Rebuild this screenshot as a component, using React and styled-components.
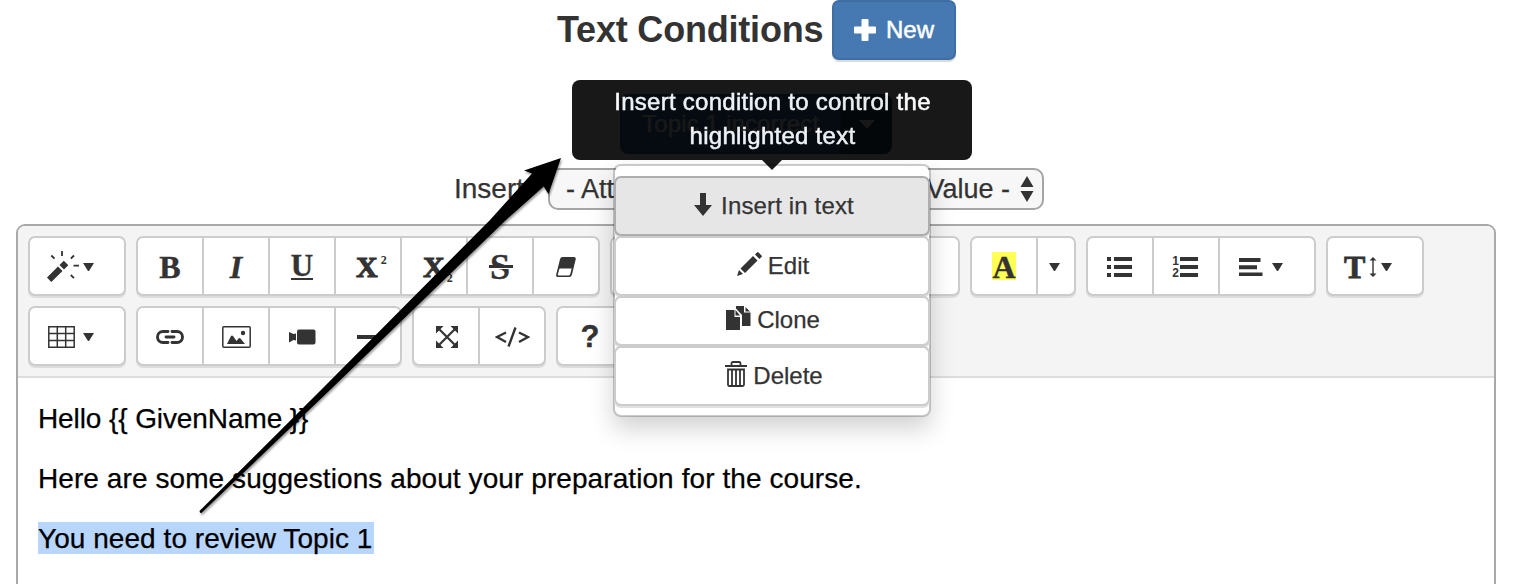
import React from "react";
import styled, { createGlobalStyle, css } from "styled-components";

const GlobalStyle = createGlobalStyle`
  *, *::before, *::after { box-sizing: border-box; }
  html, body { margin: 0; padding: 0; background: #fff; }
  body {
    overflow: hidden;
    color: #333;
    font-family: "Liberation Sans", Arial, sans-serif;
  }
  svg { display: block; flex: none; }
`;

const Page = styled.main`
  position: relative;
  width: 1522px;
  height: 584px;
  overflow: hidden;
`;

const Header = styled.header`
  display: flex;
  height: 60px;
  padding-left: 557px;
  gap: 9px;
`;

const Title = styled.h1`
  width: 266px;
  margin: 0;
  font-size: 36px;
  font-weight: 700;
  line-height: 60px;
  letter-spacing: -0.2px;
  white-space: nowrap;
`;

const Label = styled.span`
  white-space: nowrap;
  letter-spacing: ${(p) => p.$track || 0}px;
  -webkit-text-stroke: ${(p) => p.$stroke || 0.25}px currentColor;
`;

const primary = css`
  display: flex;
  align-items: center;
  height: 60px;
  border: 2px solid #3f6ea3;
  background: #4679b2;
  color: #fff;
  font: 24px "Liberation Sans", Arial, sans-serif;
`;

const NewButton = styled.button`
  ${primary}
  width: 124px;
  gap: 10px;
  padding: 0 0 0 20px;
  border-radius: 7px;
  box-shadow: 0 2px 1px #d9d9d9;
`;

const ConditionRow = styled.div`
  display: flex;
  margin-top: 34px;
  padding-left: 620px;
`;

const ConditionButton = styled.button`
  ${primary}
  width: 221px;
  padding: 0 0 0 20px;
  border-radius: 8px 0 0 8px;
`;

const ConditionToggle = styled.button`
  ${primary}
  justify-content: center;
  width: 51px;
  padding: 0;
  border-color: #204d74;
  background: #284b69;
  border-radius: 0 8px 8px 0;
`;

const InsertRow = styled.div`
  display: flex;
  align-items: center;
  height: 42px;
  margin-top: 14px;
  padding-left: 454px;
  font-size: 28px;
`;

const InsertLabel = styled(Label)`
  width: 94px;
`;

const Select = styled.div`
  display: flex;
  align-items: center;
  justify-content: space-between;
  width: 496px;
  height: 42px;
  padding: 0 8px 0 16px;
  border: 2px solid #a5a5a5;
  border-radius: 10px;
  background: #f7f7f7;
  font-size: 27px;
`;

const SelectEnd = styled.span`
  display: flex;
  align-items: center;
  gap: 10px;
`;

const Editor = styled.section`
  width: 1480px;
  height: 380px;
  margin: 14px 0 0 16px;
  border: 2px solid #a9a9a9;
  border-radius: 9px 9px 0 0;
  overflow: hidden;
`;

const Toolbar = styled.div`
  display: flex;
  flex-direction: column;
  gap: 10px;
  height: 152px;
  padding: 10px;
  border-bottom: 2px solid #ddd;
  background: #f4f4f4;
`;

const ToolRow = styled.div`
  display: flex;
  gap: 10px;
`;

const ToolGroup = styled.div`
  display: flex;
  flex: none;
  width: ${(p) => (p.$width ? `${p.$width}px` : "auto")};
  height: 60px;
  border: 2px solid #ccc;
  border-radius: 7px;
  background: #fff;
  box-shadow: 0 2px 0 #ddd;
`;

const Tool = styled.button`
  display: flex;
  align-items: center;
  justify-content: ${(p) => (p.$indent ? "flex-start" : "center")};
  width: ${(p) => p.$width || 64}px;
  padding: 2px ${(p) => p.$end || 0}px 0 ${(p) => p.$indent || 0}px;
  gap: ${(p) => p.$gap || 0}px;
  border: 0;
  background: transparent;
  color: #333;
  &:not(:first-child) {
    width: ${(p) => (p.$width || 64) + 2}px;
    border-left: 2px solid #ccc;
  }
`;

const Glyph = styled.span`
  font-family: "Liberation Serif", serif;
  font-size: ${(p) => p.$size || 32}px;
  font-weight: 700;
  font-style: ${(p) => (p.$italic ? "italic" : "normal")};
  line-height: 28px;
  -webkit-text-stroke: ${(p) => p.$stroke || 0.4}px #333;
`;

const Underlined = styled(Glyph)`
  height: 25px;
  border-bottom: 2px solid #333;
  line-height: 22px;
  font-size: 31px;
`;

const Struck = styled(Glyph)`
  display: flex;
  align-items: center;
  &::after {
    content: "";
    width: 24px;
    height: 4px;
    margin: 0 -2.500px 0 -21.500px;
    border-bottom: 1px solid #fff;
    background: #333;
  }
`;

const Script = styled.span`
  align-self: ${(p) => (p.$sub ? "flex-end" : "flex-start")};
  margin: ${(p) => (p.$sub ? "0 0 10px 2px" : "14px 0 0 3px")};
  font: 700 12px/12px "Liberation Serif", serif;
`;

const Letter = styled.span`
  font-family: "Liberation Sans", sans-serif;
  font-weight: 700;
  font-size: 31px;
  line-height: 28px;
  -webkit-text-stroke: 0.3px #333;
`;

const Marked = styled(Glyph)`
  width: 24px;
  height: 28px;
  margin-top: -2px;
  background: #ffff54;
  line-height: 31px;
  text-align: center;
`;

const Content = styled.article`
  padding: 20px;
  color: #000;
  font-size: 28px;
`;

const Paragraph = styled.p`
  height: 40px;
  margin: 0 0 20px;
  line-height: 42px;
  white-space: nowrap;
  letter-spacing: ${(p) => p.$track || 0}px;
  -webkit-text-stroke: 0.25px #000;
`;

const Selection = styled.mark`
  display: block;
  width: 336px;
  height: 32px;
  margin-top: 24px;
  background: #b8d6fb;
  color: #000;
  line-height: 33px;
`;

const Menu = styled.div`
  position: absolute;
  left: 613px;
  top: 164px;
  width: 318px;
  height: 253px;
  padding: 10px 0 0;
  border: 2px solid rgba(0, 0, 0, 0.2);
  border-radius: 8px;
  background: #fff;
  background-clip: padding-box;
  box-shadow: 0 12px 24px rgba(0, 0, 0, 0.175);
`;

const MenuItem = styled.button`
  display: flex;
  align-items: center;
  justify-content: center;
  gap: ${(p) => p.$gap || 6}px;
  width: 316px;
  height: ${(p) => p.$height || 60}px;
  margin-left: -1px;
  padding: 0 0 ${(p) => p.$raise || 0}px ${(p) => p.$shift || 2}px;
  border: 2px solid ${(p) => (p.$active ? "#adadad" : "#ccc")};
  border-radius: 7px;
  background: ${(p) => (p.$active ? "#e6e6e6" : "#fff")};
  box-shadow: 0 2px 0 #e0e0e0;
  color: #333;
  font: 24px "Liberation Sans", Arial, sans-serif;
  svg { margin-top: ${(p) => p.$lift || -4}px; }
`;

const Tooltip = styled.div`
  position: absolute;
  left: 572px;
  top: 80px;
  display: flex;
  flex-direction: column;
  align-items: center;
  width: 400px;
  height: 80px;
  padding: 5px 0 0 1px;
  border-radius: 8px;
  background: #000;
  color: #fff;
  opacity: 0.9;
  font-size: 24px;
  line-height: 34px;
  &::after {
    content: "";
    position: absolute;
    left: 190px;
    top: 80px;
    border: 10px solid transparent;
    border-top-color: #000;
    border-bottom: 0;
  }
`;

const Pointer = styled.svg`
  position: absolute;
  left: 180px;
  top: 140px;
  filter: drop-shadow(1px 2px 1px rgba(0, 0, 0, 0.4));
`;

const Caret = ({ w = 11, h = 8 }) => (
  <svg width={w} height={h} viewBox="0 0 11 8" preserveAspectRatio="none">
    <path d="M0 0h11L6 8H5z" fill="currentColor" />
  </svg>
);

const Icon = ({ w, h, children }) => (
  <svg width={w} height={h} viewBox={`0 0 ${w} ${h}`} fill="currentColor">
    {children}
  </svg>
);

const Wand = () => (
  <Icon w={32} h={32}>
    <path d="M0 26.500 11 15.500l4.500 4.500L4.300 31zM12.500 14l4.300-4.300 4.500 4.500-4.300 4.300z" />
    <path d="M15 0v5M4.300 4.500l3.200 3.200M27 4.500l-3.200 3.200M26.500 14.700H32M23.800 24l3.200 3.200" stroke="currentColor" strokeWidth="1.800" />
  </Icon>
);

const Eraser = () => (
  <Icon w={20} h={20}>
    <path fillRule="evenodd" d="M6.500 0H18q2.200 0 1.700 2.300L16 17.500Q15.400 20 13 20H2Q-.4 20 .2 17.500L4 2.200Q4.500 0 6.500 0ZM3.500 11.500 1.900 17.300Q1.700 18.500 2.800 18.500h9.500q1.500 0 1.900-1.300l1.500-5.700z" />
  </Icon>
);

const Bullets = () => (
  <Icon w={25} h={20}>
    <path d="M0 0h4v4H0zM7 0h18v4H7zM0 8h4v4H0zM7 8h18v4H7zM0 16h4v4H0zM7 16h18v4H7z" />
  </Icon>
);

const NumbersRow = styled.span`
  display: flex;
  align-items: center;
  gap: 1px;
`;

const Numbers = styled.span`
  display: flex;
  flex-direction: column;
  font: 700 12px/12px "Liberation Sans", sans-serif;
`;

const NumberedList = () => (
  <NumbersRow>
    <Numbers>
      <span>1</span>
      <span>2</span>
    </Numbers>
    <Icon w={18} h={20}>
      <path d="M0 0h18v4H0zM0 8h18v4H0zM0 16h18v4H0z" />
    </Icon>
  </NumbersRow>
);

const AlignLeft = () => (
  <Icon w={24} h={18}>
    <path d="M0 0h21.500v4H0zM0 7.200h18v4H0zM0 14.400h23.500v4H0z" />
  </Icon>
);

const UpDown = () => (
  <Icon w={8} h={20}>
    <path d="M4 0 7.500 3.500H4.700v13h2.800L4 20 .5 16.500h2.800v-13H.5z" />
  </Icon>
);

const TableIcon = () => (
  <Icon w={27} h={22}>
    <path d="M.8.8h25.400v20.400H.8zM9.300 1v20M17.700 1v20M1 7.600h25M1 14.400h25" fill="none" stroke="currentColor" strokeWidth="1.500" />
  </Icon>
);

const LinkIcon = () => (
  <Icon w={28} h={14}>
    <path d="M12 1.500H7a5.500 5.500 0 0 0 0 11h5M16 1.500H21a5.500 5.500 0 0 1 0 11h-5M10 7h8" fill="none" stroke="currentColor" strokeWidth="2.900" strokeLinecap="round" />
  </Icon>
);

const Picture = () => (
  <Icon w={29} h={22}>
    <rect x=".8" y=".8" width="27.400" height="20.400" rx="1" fill="none" stroke="currentColor" strokeWidth="1.500" />
    <circle cx="21" cy="7" r="2.200" />
    <path d="m5 18 4-8q1-1.200 2 0l3.500 5 2-2.500q1-1 2 0L23 18z" />
  </Icon>
);

const Video = () => (
  <Icon w={27} h={16}>
    <rect x="8" y=".5" width="18.500" height="15" rx="2" />
    <path d="m0 3 4.500 2L7 4.500v7l-2.500-.5L0 13.500z" />
  </Icon>
);

const Fullscreen = () => (
  <Icon w={22} h={22}>
    <path d="M0 0h7.500L0 7.500zM22 0v7.500L14.500 0zM0 22v-7.500L7.500 22zM22 22h-7.500l7.500-7.500z" />
    <path d="m2 2 18 18M20 2 2 20" stroke="currentColor" strokeWidth="2.200" />
  </Icon>
);

const Code = () => (
  <Icon w={35} h={20}>
    <path d="m11 5.500-9 4.500 9 5M24 5.500l9 4.500-9 5M20.500 .5l-7 19" fill="none" stroke="currentColor" strokeWidth="2.400" />
  </Icon>
);

export default function App() {
  return (
    <Page>
      <GlobalStyle />
      <Header>
        <Title>Text Conditions</Title>
        <NewButton>
          <Icon w={22} h={22}>
            <path d="M8.500 0h5q1 0 1 1v6.500H21q1 0 1 1v5q0 1-1 1h-6.500V21q0 1-1 1h-5q-1 0-1-1v-6.500H1q-1 0-1-1v-5q0-1 1-1h6.500V1q0-1 1-1z" />
          </Icon>
          <Label $stroke={0.5}>New</Label>
        </NewButton>
      </Header>

      <ConditionRow>
        <ConditionButton>
          <Label $track={0.15}>Topic 1 incorrect</Label>
        </ConditionButton>
        <ConditionToggle>
          <Caret w={16} h={8} />
        </ConditionToggle>
      </ConditionRow>

      <InsertRow>
        <InsertLabel>Insert:</InsertLabel>
        <Select>
          <Label>- Attribute -</Label>
          <SelectEnd>
            <Label>Value -</Label>
            <Icon w={14} h={26}>
              <path d="m7 0 6.500 11H.5zM.5 15h13L7 26z" />
            </Icon>
          </SelectEnd>
        </Select>
      </InsertRow>

      <Editor>
        <Toolbar>
          <ToolRow>
            <ToolGroup>
              <Tool $width={94} $indent={17} $gap={4}><Wand /><Caret /></Tool>
            </ToolGroup>
            <ToolGroup>
              <Tool><Glyph>B</Glyph></Tool>
              <Tool><Glyph $italic>I</Glyph></Tool>
              <Tool><Underlined>U</Underlined></Tool>
              <Tool $indent={20}><Glyph $size={30} $stroke={1}>X</Glyph><Script>2</Script></Tool>
              <Tool $indent={21}><Glyph $size={30} $stroke={1}>X</Glyph><Script $sub>2</Script></Tool>
              <Tool><Struck $size={36}>S</Struck></Tool>
              <Tool><Eraser /></Tool>
            </ToolGroup>
            <ToolGroup $width={350} />
            <ToolGroup>
              <Tool><Marked>A</Marked></Tool>
              <Tool $width={36} $end={3}><Caret /></Tool>
            </ToolGroup>
            <ToolGroup>
              <Tool $end={2}><Bullets /></Tool>
              <Tool $end={2}><NumberedList /></Tool>
              <Tool $width={94} $indent={19} $gap={9}><AlignLeft /><Caret /></Tool>
            </ToolGroup>
            <ToolGroup>
              <Tool $width={94} $indent={16} $gap={4}>
                <Glyph $stroke={0.8}>T</Glyph><UpDown /><Caret />
              </Tool>
            </ToolGroup>
          </ToolRow>
          <ToolRow>
            <ToolGroup>
              <Tool $width={94} $indent={18} $gap={8}><TableIcon /><Caret /></Tool>
            </ToolGroup>
            <ToolGroup>
              <Tool><LinkIcon /></Tool>
              <Tool><Picture /></Tool>
              <Tool><Video /></Tool>
              <Tool><Icon w={22} h={4}><path d="M0 0h22v4H0z" /></Icon></Tool>
            </ToolGroup>
            <ToolGroup>
              <Tool $indent={22}><Fullscreen /></Tool>
              <Tool><Code /></Tool>
            </ToolGroup>
            <ToolGroup>
              <Tool><Letter>?</Letter></Tool>
            </ToolGroup>
          </ToolRow>
        </Toolbar>
        <Content>
          <Paragraph $track={-0.1}>{"Hello {{ GivenName }}"}</Paragraph>
          <Paragraph $track={0.08}>Here are some suggestions about your preparation for the course.</Paragraph>
          <Paragraph $track={0.05}><Selection>You need to review Topic 1</Selection></Paragraph>
        </Content>
      </Editor>

      <Menu>
        <MenuItem $active $gap={9} $shift={4}>
          <Icon w={18} h={23}><path d="M6 0h6v12h6l-9 11L0 12h6z" /></Icon>
          <Label $track={0.15}>Insert in text</Label>
        </MenuItem>
        <MenuItem>
          <Icon w={25} h={24}>
            <path d="m0 24 2-6 4 4zM3.500 16.500 16 4l4.500 4.500L8 21zM18 2.500 20 .5q.8-.8 1.600 0l2.900 2.900q.8.800 0 1.600L22.500 7z" />
          </Icon>
          <Label>Edit</Label>
        </MenuItem>
        <MenuItem $height={50} $lift={-5} $raise={2}>
          <Icon w={25} h={24}>
            <path d="M0 4h8.500v7H14v13H0zM9.500 4l4.500 5.500H9.500zM10 0h8v6.500h6.500V20H16V9l-6-6.500zM19.500 1l4.500 4.500h-4.500z" />
          </Icon>
          <Label>Clone</Label>
        </MenuItem>
        <MenuItem $shift={4}>
          <Icon w={22} h={26}>
            <path d="M0 5h22M6.500 5V2.500q0-1.500 1.500-1.500h6q1.500 0 1.500 1.500V5M3 8.500h16v15q0 1.500-1.500 1.500h-13Q3 25 3 23.500zM7 9v15M11 9v15M15 9v15" fill="none" stroke="currentColor" strokeWidth="1.800" />
          </Icon>
          <Label>Delete</Label>
        </MenuItem>
      </Menu>

      <Tooltip>
        <Label $track={0.27} $stroke={0.5}>Insert condition to control the</Label>
        <Label $track={0.27} $stroke={0.5}>highlighted text</Label>
      </Tooltip>

      <Pointer width="400" height="390" viewBox="180 140 400 390">
        <path d="M199.500 511 321 390 490 220 532 173.500 524 170.500 561 158 548.500 194 543.700 186.500 506 220 330 390 202 512.500Q200 514 199.500 511Z" fill="#000" />
      </Pointer>
    </Page>
  );
}
